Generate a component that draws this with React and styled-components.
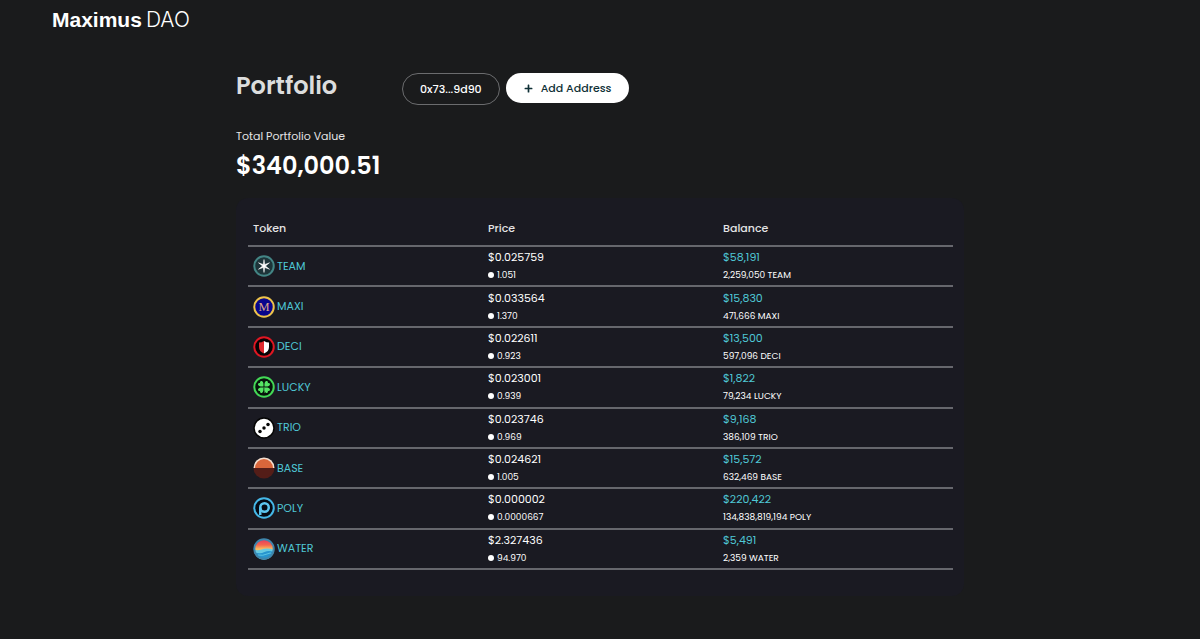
import React from "react";
import styled, { createGlobalStyle } from "styled-components";
import { FaPlus } from "react-icons/fa";

const GlobalStyle = createGlobalStyle`
  * {
    box-sizing: border-box;
  }

  body {
    margin: 0;
    background: #1a1b1c;
    color: #fff;
    font-family: Poppins, Inter, sans-serif;
    font-size: 11px;
  }
`;

const Header = styled.header`
  padding: 8px 52px;
`;

const Logo = styled.a`
  display: inline-flex;
  gap: 4px;
  color: #fff;
  font: 700 21px/24px "Liberation Sans", sans-serif;
  text-decoration: none;
`;

const LogoLight = styled.span`
  font-family: Inter, sans-serif;
  font-weight: 300;
`;

const Main = styled.main`
  max-width: 728px;
  margin: 0 auto;
  padding: 30px 0 40px;
`;

const TitleRow = styled.div`
  display: flex;
  align-items: flex-start;
`;

const Title = styled.h1`
  width: 166px;
  margin: 0;
  color: #dcdddd;
  font-size: 24px;
  font-weight: 600;
  line-height: 32px;
`;

const Actions = styled.div`
  display: flex;
  align-items: flex-start;
  gap: 6px;
  padding-top: 3px;
`;

const Button = styled.button`
  display: flex;
  align-items: center;
  gap: 8px;
  height: ${({ $primary }) => ($primary ? "30px" : "32px")};
  padding: 0 ${({ $primary }) => ($primary ? "18px" : "17px")};
  border: ${({ $primary }) => ($primary ? "0" : "1px solid #6b6c6e")};
  border-radius: 16px;
  background: ${({ $primary }) => ($primary ? "#fff" : "transparent")};
  color: ${({ $primary }) => ($primary ? "#0f3036" : "#fff")};
  font-family: inherit;
  font-size: 11px;
  font-weight: 500;
  cursor: pointer;
`;

const Summary = styled.section`
  padding: 22px 0 11px;
`;

const Label = styled.p`
  margin: 0;
  color: #e4e4e5;
  line-height: 18px;
`;

const Total = styled.p`
  margin: 0;
  font-size: 24px;
  font-weight: 600;
  line-height: 42px;
`;

const Panel = styled.section`
  padding: 14px 11px 26px 12px;
  border-radius: 12px;
  background: #1a1a22;
`;

const Table = styled.table`
  width: 100%;
  height: 358px;
  table-layout: fixed;
  border-collapse: collapse;
`;

const HeadCell = styled.th`
  height: 34px;
  padding: 0 5px;
  border-bottom: 2px solid #66676d;
  color: #e4e4e5;
  font-weight: 500;
  text-align: left;
`;

const Cell = styled.td`
  padding: 0 5px;
  border-bottom: 2px solid #66676d;
`;

const TokenLink = styled.a`
  display: flex;
  align-items: center;
  gap: 2px;
  color: #4fc8d6;
  text-decoration: none;
`;

const Value = styled.div`
  color: ${({ $accent }) => ($accent ? "#4fc8d6" : "#fff")};
  line-height: 18px;
`;

const Detail = styled.div`
  display: flex;
  align-items: center;
  gap: 3px;
  font-size: 9px;
  line-height: 18px;
`;

const Dot = styled.span`
  width: 6px;
  height: 6px;
  border-radius: 50%;
  background: #fff;
`;

const Coin = styled.svg`
  width: 22px;
  height: 22px;
`;

const LEAF = "M22 20.500C18 17 16 14.500 16.500 11.500C17 8 21 8 22 11.500C23 8 27 8 27.500 11.500C28 14.500 26 17 22 20.500Z";

const icons = {
  TEAM: (
    <>
      <circle cx="22" cy="22" r="19.500" fill="#1d3439" stroke="#438585" strokeWidth="4" />
      <path
        d="M22 9L23.5 19L33 15.500L25 22L33 28.500L23.500 25L22 35L20.500 25L11 28.500L19 22L11 15.500L20.500 19Z"
        fill="#fff"
        stroke="#fff"
      />
    </>
  ),
  MAXI: (
    <>
      <circle cx="22" cy="22" r="19.500" fill="#08058c" stroke="#eec34b" strokeWidth="4" />
      <text x="22" y="30" fill="#d8a58c" fontFamily="Liberation Serif, serif" fontSize="25" textAnchor="middle">
        M
      </text>
    </>
  ),
  DECI: (
    <>
      <circle cx="22" cy="22" r="19.500" fill="#050305" stroke="#df1622" strokeWidth="4" />
      <path d="M22 10Q17 13 12 13V22Q12 31 22 35Z" fill="#e02a30" />
      <path d="M22 10Q27 13 32 13V22Q32 31 22 35Z" fill="#fff" />
    </>
  ),
  LUCKY: (
    <>
      <circle cx="22" cy="22" r="19.500" fill="#07130b" stroke="#43d856" strokeWidth="4" />
      {[45, 135, 225, 315].map((angle) => (
        <path key={angle} d={LEAF} fill="#55e564" transform={`rotate(${angle} 22 22)`} />
      ))}
      <path d="M22 22Q24 28 23 34" fill="none" stroke="#55e564" strokeWidth="1" />
    </>
  ),
  TRIO: (
    <>
      <circle cx="22" cy="22" r="20" fill="#fff" stroke="#050505" strokeWidth="3" />
      <circle cx="14" cy="29" r="3.500" fill="#050505" />
      <circle cx="22" cy="22" r="3.500" fill="#050505" />
      <circle cx="30" cy="15" r="3.500" fill="#050505" />
    </>
  ),
  BASE: (
    <>
      <path d="M1 22A21 21 0 0 1 43 22Z" fill="#f4dfd0" />
      <path d="M4 22A18 18 0 0 1 40 22Z" fill="#d9663b" />
      <path d="M1 22A21 21 0 0 0 43 22Z" fill="#541d18" />
    </>
  ),
  POLY: (
    <>
      <circle cx="22" cy="22" r="19.500" fill="#050a14" stroke="#45b8e8" strokeWidth="4" />
      <circle cx="23" cy="21" r="8.500" fill="none" stroke="#5cc5ef" strokeWidth="5" />
      <path d="M14.500 21V36" stroke="#5cc5ef" strokeWidth="5" />
    </>
  ),
  WATER: (
    <>
      <defs>
        <linearGradient id="sunset" x1="0" y1="0" x2="0" y2="1">
          <stop offset="0.100" stopColor="#e8455c" />
          <stop offset="0.300" stopColor="#f4664d" />
          <stop offset="0.500" stopColor="#f9bd62" />
        </linearGradient>
      </defs>
      <circle cx="22" cy="22" r="20" fill="url(#sunset)" />
      <path d="M2 23Q9 26 17 23Q29 19 42 24A20 20 0 0 1 2 23Z" fill="#68cbe2" />
      <path d="M3 28Q13 33 23 28Q32 24 41 28A20 20 0 0 1 3 28Z" fill="#2795cf" />
      <path d="M10 34Q20 36 28 32T38 32" fill="none" stroke="#5cc4e4" strokeWidth="2" />
      <circle cx="22" cy="22" r="19.500" fill="none" stroke="#3f86ac" strokeWidth="4" />
    </>
  ),
};

const tokens = [
  { name: "TEAM", price: "$0.025759", ratio: "1.051", value: "$58,191", amount: "2,259,050" },
  { name: "MAXI", price: "$0.033564", ratio: "1.370", value: "$15,830", amount: "471,666" },
  { name: "DECI", price: "$0.022611", ratio: "0.923", value: "$13,500", amount: "597,096" },
  { name: "LUCKY", price: "$0.023001", ratio: "0.939", value: "$1,822", amount: "79,234" },
  { name: "TRIO", price: "$0.023746", ratio: "0.969", value: "$9,168", amount: "386,109" },
  { name: "BASE", price: "$0.024621", ratio: "1.005", value: "$15,572", amount: "632,469" },
  { name: "POLY", price: "$0.000002", ratio: "0.0000667", value: "$220,422", amount: "134,838,819,194" },
  { name: "WATER", price: "$2.327436", ratio: "94.970", value: "$5,491", amount: "2,359" },
];

const TokenRow = ({ token }) => {
  const { name, price, ratio, value, amount } = token;

  return (
    <tr>
      <Cell>
        <TokenLink href={`#${name}`}>
          <Coin viewBox="0 0 44 44" aria-hidden="true">
            {icons[name]}
          </Coin>
          {name}
        </TokenLink>
      </Cell>
      <Cell>
        <Value>{price}</Value>
        <Detail>
          <Dot />
          {ratio}
        </Detail>
      </Cell>
      <Cell>
        <Value $accent>{value}</Value>
        <Detail>
          {amount} {name}
        </Detail>
      </Cell>
    </tr>
  );
};

const App = () => (
  <>
    <GlobalStyle />
    <Header>
      <Logo href="#home">
        Maximus<LogoLight>DAO</LogoLight>
      </Logo>
    </Header>
    <Main>
      <TitleRow>
        <Title>Portfolio</Title>
        <Actions>
          <Button type="button">0x73...9d90</Button>
          <Button type="button" $primary>
            <FaPlus size={9} />
            Add Address
          </Button>
        </Actions>
      </TitleRow>
      <Summary>
        <Label>Total Portfolio Value</Label>
        <Total>$340,000.51</Total>
      </Summary>
      <Panel>
        <Table>
          <thead>
            <tr>
              <HeadCell scope="col">Token</HeadCell>
              <HeadCell scope="col">Price</HeadCell>
              <HeadCell scope="col">Balance</HeadCell>
            </tr>
          </thead>
          <tbody>
            {tokens.map((token) => (
              <TokenRow key={token.name} token={token} />
            ))}
          </tbody>
        </Table>
      </Panel>
    </Main>
  </>
);

export default App;
